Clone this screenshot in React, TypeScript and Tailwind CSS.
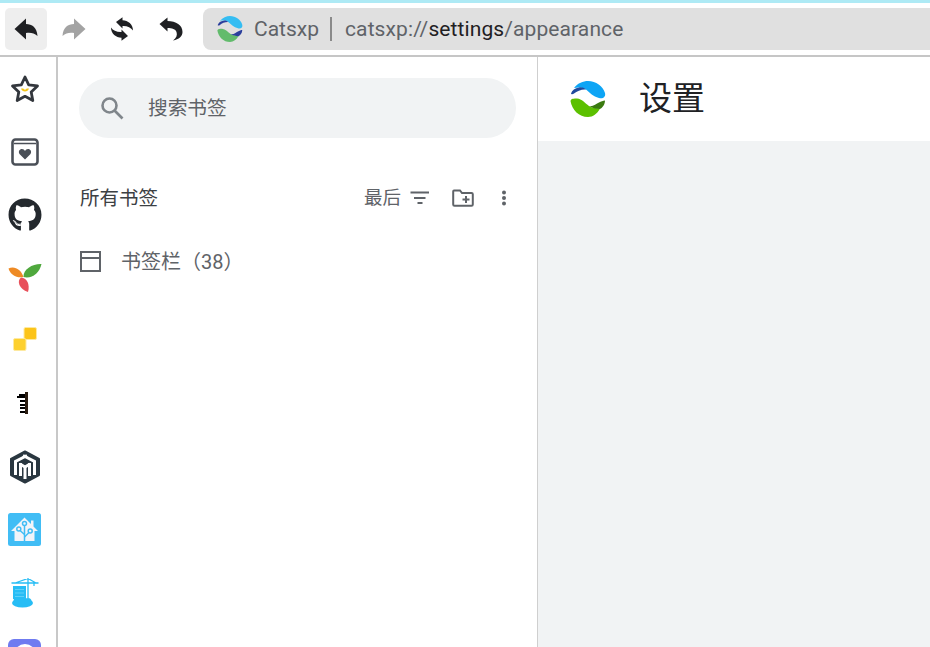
import React from "react";
import { FaGithub } from "react-icons/fa";

const cjk = { fontFamily: 'Roboto, "Noto Sans CJK SC", sans-serif' };

function Reply({ flip, color }: { flip?: boolean; color: string }) {
  return (
    <svg width="24" height="22" viewBox="0 0 24 22" style={{ transform: flip ? "scaleX(-1)" : undefined }}>
      <path d="M0.5 11 L12 0.5 V6 C18 6 23 9.5 23.5 18 C20 15 17 14.5 12 15 V21.5 Z" fill={color} />
    </svg>
  );
}

function SyncIcon() {
  const d = "M6 5 L12.5 0.3 V3.2 C18 3.5 23 7 23 13.5 C21 10.5 17 8.7 12.5 9 V11.5 Z";
  return (
    <svg width="24" height="24" viewBox="0 0 24 24" fill="#1f2023">
      <path d={d} />
      <path d={d} transform="rotate(180 12 12)" />
    </svg>
  );
}

function UndoIcon() {
  return (
    <svg width="24" height="24" viewBox="0 0 24 24" fill="#1f2023">
      <path d="M0.5 7 L8.5 0.5 V4 C17 4 23.5 8 23.5 15 C23.5 19 20 22.5 14 23.5 C17.5 21 18.5 18 17.5 15 C16.5 12 13 11 8.5 11 V14.5 Z" />
    </svg>
  );
}

function Logo({ size, a, b, c, d }: { size: number; a: string; b: string; c: string; d: string }) {
  return (
    <svg width={size} height={size} viewBox="0 0 36 36">
      <path d="M4 7 C8 2 13 0 18 0 C26 0 33 5 35 12 C36 16 33 18 29 17 C23 15.5 20 12 16 8.5 C12 6 8 6 4 7 Z" fill={a} />
      <path d="M1 12.5 C2 9 5 7 9 6.5 C12 6 14 7 16 8.5 C12 8 7 10 4 12.5 C3 13.5 1 13.5 1 12.5 Z" fill={b} />
      <path d="M0.5 20 C1 17.5 4 17.5 7 17.5 C12 18 15 22 19 25 C22 27 26 27 30 27.5 C27 33 23 36 18 36 C9 36 2 29 0.5 20 Z" fill={c} />
      <path d="M35 19.5 C35 24 32 27 30 28 C26 28 22 27 19 25 C23 26 26 23 29 21.5 C31 20.5 33 19.5 35 19.5 Z" fill={d} />
    </svg>
  );
}

function RailIcon({ children }: { children: React.ReactNode }) {
  return <div className="h-[63px] flex items-center justify-center shrink-0">{children}</div>;
}

export default function App() {
  return (
    <div className="w-[930px] h-[647px] overflow-hidden bg-white flex flex-col" style={cjk}>
      <div className="h-[3px] bg-[#aeeaf5] shrink-0" />
      <div className="h-[52px] flex items-center shrink-0 pl-[5px]">
        <div className="w-[42px] h-[42px] rounded-[5px] bg-[#eeeeee] flex items-center justify-center">
          <Reply color="#1f2023" />
        </div>
        <div className="w-[26px] ml-[14px] flex justify-center"><Reply flip color="#a3a3a3" /></div>
        <div className="ml-[23px]"><SyncIcon /></div>
        <div className="ml-[25px]"><UndoIcon /></div>
        <div className="ml-[20px] flex-1 h-[42px] bg-[#e0e0e0] rounded-l-[8px] flex items-center pl-[14px] text-[21px] text-[#5f6368]">
          <Logo size={26} a="#35bdf2" b="#2b3f9c" c="#62bb6c" d="#2b3f9c" />
          <span className="ml-[11px] pt-[1px]">Catsxp</span>
          <span className="ml-[11px] w-[2px] h-[24px] bg-[#8a8a8a]" />
          <span className="ml-[13px] pt-[1px] tracking-[0.1px]">catsxp://<span className="text-[#1f2023]">settings</span>/appearance</span>
        </div>
      </div>
      <div className="h-[2px] bg-[#c6c6c6] shrink-0" />
      <div className="flex-1 flex min-h-0">
        {/* rail */}
        <div className="w-[58px] shrink-0 border-r-2 border-[#c8c8c8] flex flex-col overflow-hidden pr-[8px] pl-[1px]">
          <RailIcon>
            <svg width="30" height="30" viewBox="0 0 30 30">
              <path d="M15 3 L18.7 10.8 L27.5 11.9 L21.2 17.9 L22.8 26.5 L15 22.3 L7.2 26.5 L8.8 17.9 L2.5 11.9 L11.3 10.8 Z" fill="none" stroke="#33373d" strokeWidth="2.8" strokeLinejoin="round" />
              <path d="M11 14.5 C12 18.5 18 18.5 19 14.5 L16.8 14.5 C16 16 14 16 13.2 14.5 Z" fill="#f5c518" />
            </svg>
          </RailIcon>
          <RailIcon>
            <svg width="28" height="28" viewBox="0 0 28 28">
              <rect x="1.5" y="1.5" width="25" height="25" rx="3" fill="none" stroke="#4a4f57" strokeWidth="2.6" />
              <path d="M3 5.5 H25" stroke="#4a4f57" strokeWidth="1.5" />
              <path d="M14 21.5 L8.5 16 C7 13.5 8.5 11 11 11 C12.3 11 13.4 11.8 14 13 C14.6 11.8 15.7 11 17 11 C19.5 11 21 13.5 19.5 16 Z" fill="#4a4f57" />
            </svg>
          </RailIcon>
          <RailIcon><FaGithub size={34} color="#24292e" /></RailIcon>
          <RailIcon>
            <svg width="34" height="30" viewBox="0 0 34 30">
              <path d="M15.5 14 C13 6 6 2.5 0.5 5.5 C2.5 12 9 15.5 15.5 14 Z" fill="#ee8a24" />
              <path d="M15.5 14 C15 6 25 0.5 33.5 1 C31.5 10 24 16 15.5 14 Z" fill="#4fa83d" />
              <path d="M13 14.5 C8.5 18 11 26 20 29 C22 22 19.5 15 13 14.5 Z" fill="#e8505b" />
            </svg>
          </RailIcon>
          <RailIcon>
            <svg className="mb-[3px]" width="24" height="24" viewBox="0 0 24 24">
              <rect x="11" y="0.5" width="12.5" height="12" rx="1.5" fill="#fcc419" stroke="#fde9a0" />
              <rect x="0.5" y="11.5" width="12.5" height="12" rx="1.5" fill="#fdd02f" stroke="#fde9a0" />
            </svg>
          </RailIcon>
          <RailIcon>
            <svg className="mr-[3px]" width="12" height="23" viewBox="0 0 12 23" shapeRendering="crispEdges">
              <rect x="8" y="0" width="3" height="22" fill="#2a1c10" />
              <path d="M2 2 H8 V6 H0 V4 H2 Z M3 8 H8 V10 H3 Z M3 11.5 H8 V13.5 H3 Z M3 15 H8 V17 H3 Z M3 18.5 H8 V20.5 H3 Z" fill="#000" />
            </svg>
          </RailIcon>
          <RailIcon>
            <svg width="32" height="34" viewBox="0 0 32 34">
              <path d="M16 1.5 L30 9 V25 L16 32.5 L2 25 V9 Z" fill="#2a3740" stroke="#2a3740" strokeLinejoin="round" strokeWidth="2" />
              <g stroke="#fff" strokeWidth="3" fill="none">
                <path d="M6.5 25 V11.5 L18 5.5" />
                <path d="M25.5 25 V11.5 L14 5.5" />
                <path d="M11 14 L16 17 L21 14" />
                <path d="M11.5 13 V26" />
                <path d="M20.5 13 V26" />
                <path d="M16 16.5 V29" />
              </g>
            </svg>
          </RailIcon>
          <RailIcon>
            <svg width="33" height="33" viewBox="0 0 33 33">
              <rect width="33" height="33" rx="2.5" fill="#41bdf5" />
              <path d="M16.5 4.5 L23 11 V7.5 H25.5 V13.5 L30 18 H26.5 V28 H6.5 V18 H3 Z" fill="#f2f4f9" />
              <g stroke="#41bdf5" strokeWidth="1.5" fill="none">
                <path d="M16.5 28 V12.5" />
                <path d="M16.5 21.5 L12 17.5" />
                <path d="M16.5 24 L21 19.5" />
                <circle cx="16.5" cy="10.5" r="2" />
                <circle cx="10.8" cy="16" r="2" />
                <circle cx="22.2" cy="18" r="2" />
              </g>
            </svg>
          </RailIcon>
          <RailIcon>
            <svg width="28" height="30" viewBox="0 0 28 30">
              <path d="M0.5 5 H27.5 M17 0 V20 M17 0.5 L4 5 M17 0.5 L25 5 M23 5 V8" stroke="#27bdf5" strokeWidth="1.3" fill="none" />
              <rect x="2" y="8" width="13" height="13" fill="#27bdf5" />
              <path d="M4 11.5 H13 M4 15 H13 M4 18.5 H13" stroke="#5fd0f8" strokeWidth="1" />
              <ellipse cx="11.5" cy="25" rx="10.5" ry="4.5" fill="#27bdf5" />
              <circle cx="6" cy="23" r="3.5" fill="#27bdf5" />
              <circle cx="17" cy="23.5" r="3.5" fill="#27bdf5" />
            </svg>
          </RailIcon>
          <RailIcon>
            <div className="w-[33px] h-[33px] rounded-[6px] bg-[#6f7bf0] overflow-hidden flex justify-center pt-[5px]">
              <div className="w-[22px] h-[22px] rounded-full bg-white" />
            </div>
          </RailIcon>
        </div>

        {/* bookmarks */}
        <div className="w-[480px] shrink-0 border-r border-[#cfcfcf] px-[21px] pt-[21px] flex flex-col">
          <div className="w-[437px] h-[60px] bg-[#f1f3f4] rounded-full flex items-center pl-[20px]">
            <svg width="26" height="26" viewBox="0 0 26 26" fill="none" stroke="#80868b" strokeWidth="2.6">
              <circle cx="10.5" cy="10.5" r="7" />
              <path d="M15.5 15.5 L23.5 23.5" />
            </svg>
            <span className="ml-[23px] pt-[1px] text-[19.7px] text-[#5f6368]">搜索书签</span>
          </div>
          <div className="mt-[34px] h-[52px] flex items-center text-[#3c4043]">
            <span className="text-[19.5px] ml-[1px] pt-[1px]">所有书签</span>
            <span className="ml-auto pt-[1px] text-[18.5px] text-[#5f6368]">最后</span>
            <svg className="ml-[9px]" width="20" height="16" viewBox="0 0 20 16" fill="#5f6368">
              <rect x="0.5" y="1.5" width="18.5" height="2" />
              <rect x="4" y="7" width="11.5" height="2" />
              <rect x="7.5" y="12" width="5" height="2" />
            </svg>
            <svg className="ml-[22px]" width="22" height="18" viewBox="0 0 22 18" fill="none">
              <path d="M1.2 15.5 V2.5 C1.2 2 1.6 1.5 2 1.5 H8 L10 4 H19.5 C20.2 4 20.8 4.5 20.8 5.2 V15.5 C20.8 16.2 20.2 16.8 19.5 16.8 H2.5 C1.8 16.8 1.2 16.2 1.2 15.5 Z" stroke="#5f6368" strokeWidth="2" />
              <path d="M14 7 V14 M10.5 10.5 H17.5" stroke="#5f6368" strokeWidth="2" />
            </svg>
            <svg className="ml-[27px] mr-[9px]" width="6" height="16" viewBox="0 0 6 16" fill="#5f6368">
              <circle cx="3" cy="2.5" r="2" />
              <circle cx="3" cy="8" r="2" />
              <circle cx="3" cy="13.5" r="2" />
            </svg>
          </div>
          <div className="mt-[17px] h-[40px] flex items-center">
            <svg className="ml-[1px]" width="21" height="21" viewBox="0 0 21 21" fill="none" stroke="#5f6368" strokeWidth="2">
              <rect x="1" y="1" width="19" height="19" />
              <path d="M1 7 H20" />
            </svg>
            <span className="ml-[20px] pt-[1px] text-[20px] text-[#5f6368]">书签栏（38）</span>
          </div>
        </div>

        {/* settings */}
        <div className="flex-1 flex flex-col bg-[#f1f3f4]">
          <div className="h-[84px] bg-white flex items-center pl-[32px]">
            <Logo size={36} a="#0ea5f5" b="#204a9c" c="#5cc000" d="#3a7a10" />
            <span className="ml-[33px] text-[33px] text-[#202124]">设置</span>
          </div>
        </div>
      </div>
    </div>
  );
}
